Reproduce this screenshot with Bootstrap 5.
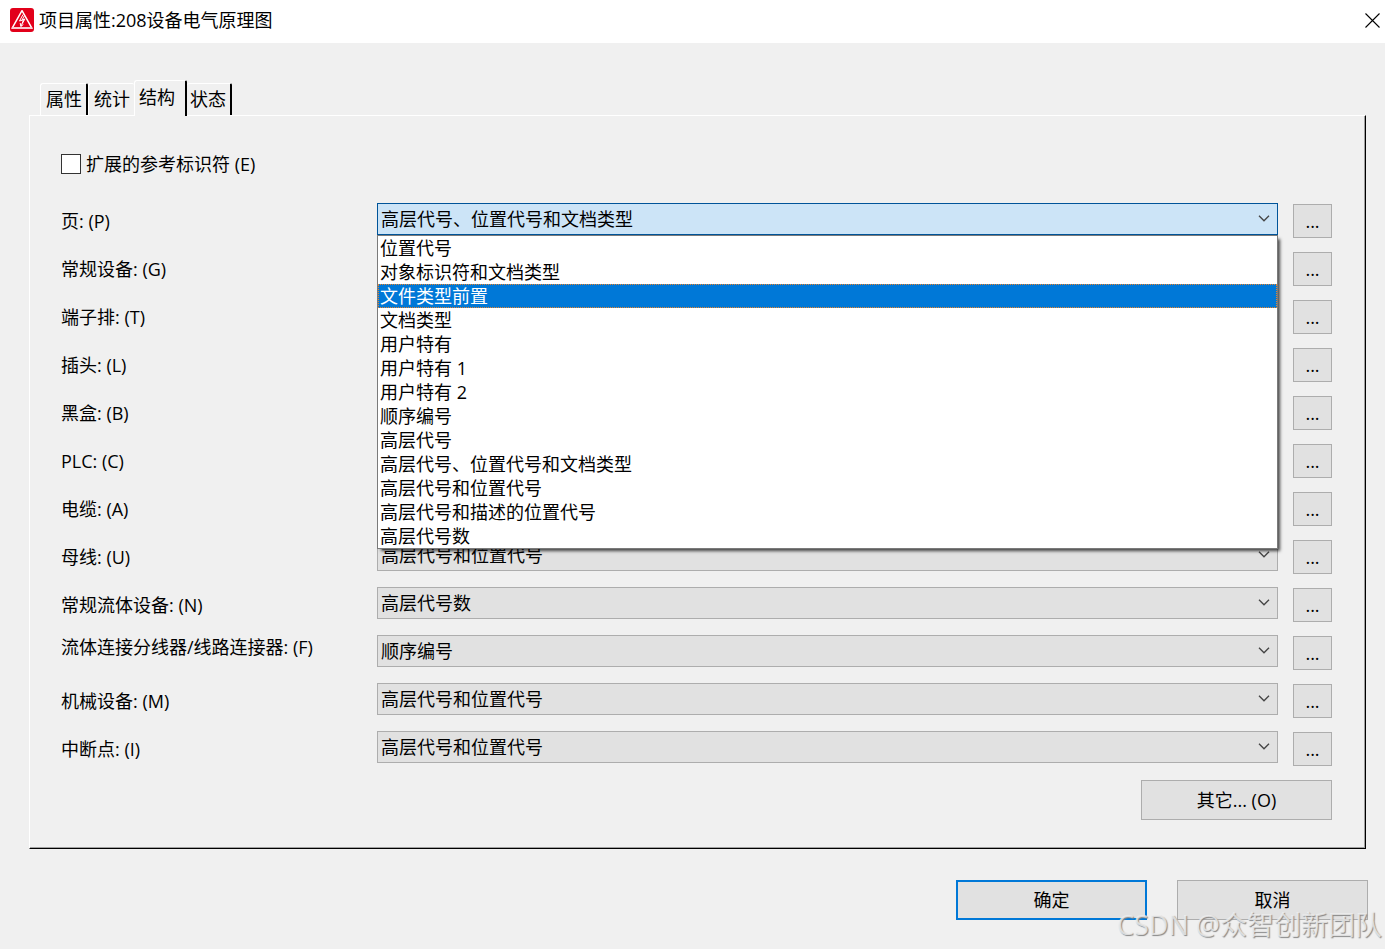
<!DOCTYPE html>
<html lang="zh-CN">
<head>
<meta charset="utf-8">
<meta name="viewport" content="width=device-width, initial-scale=1">
<title>项目属性:208设备电气原理图</title>
<link href="https://cdn.jsdelivr.net/npm/bootstrap@5.3.0/dist/css/bootstrap.min.css" rel="stylesheet">
<style>
  body { font-family: "Open Sans", "Noto Sans CJK SC", sans-serif; font-size: 18px; line-height: 24px; color: #000; background: #f0f0f0; }
  .title-bar { height: 43px; padding: 0 4px 3px 10px; gap: 5px; }
  .title-bar h1 { font-size: 18px; line-height: 24px; font-weight: 400; }
  .close-btn { width: 17px; height: 17px; }
  .dialog-body { padding: 37px 17px 29px 29px; }

  .tab-strip { padding-left: 11px; }
  .tab-btn { height: 32px; padding: 0 4px 1px 5px; border: 1px solid #fff; border-width: 1px 2px 0 1px; border-right-color: #000; border-radius: 3px 2px 0 0; background: #f0f0f0; color: #000; }
  .tab-btn.before-active { border-right: 0; }
  .tab-btn.active { height: 36px; padding: 0 10px 3px 4px; margin-bottom: -1px; position: relative; z-index: 1; }
  .tab-btn.after-active { padding-left: 3px; border-left: 0; }

  .panel { margin-right: 2px; padding: 36px 33px 28px 31px; border: 1px solid #fff; border-right-color: #000; border-bottom-color: #000; box-shadow: inset -1px -1px #a0a0a0; }
  .check-line { gap: 5px; margin-bottom: 27px; }
  .check-line .form-check-input { width: 20px; height: 20px; margin: 0; border: 1px solid #333; border-radius: 0; background-color: #fff; }

  .field-row { display: grid; grid-template-columns: 316px minmax(0, 1fr) 39px; height: 48px; align-items: start; }
  .field-row label { line-height: 36px; white-space: nowrap; }
  .field-row label.raised { line-height: 24px; }
  .combo { position: relative; margin-right: 15px; }
  .combo .form-select { height: 32px; padding: 0 24px 0 3px; font-size: 18px; line-height: 30px; color: #000; border: 1px solid #adadad; border-radius: 0;
    background: #e1e1e1 url("data:image/svg+xml,%3Csvg xmlns='http://www.w3.org/2000/svg' width='12' height='8'%3E%3Cpath d='M1 .8 6 5.8 11 .8' fill='none' stroke='%23444' stroke-width='1.3'/%3E%3C/svg%3E") no-repeat right 7px center / 12px 8px; }
  .combo.open .form-select { background-color: #cce4f7; border-color: #005499; }
  .drop-list { position: absolute; top: 100%; left: 0; right: 0; z-index: 5; border: 1px solid #7a7a7a; background: #fff; box-shadow: 3px 3px 3px -1px rgba(0,0,0,.7); }
  .drop-list li { padding-left: 2px; height: 24px; }
  .drop-list li.chosen { background: #0078d7; color: #fff; outline: 1px dotted #e8842c; outline-offset: -1px; }

  .win-btn { width: 191px; height: 40px; padding: 0; border: 1px solid #adadad; background: #e1e1e1; color: #000; }
  .more-btn { width: 39px; height: 34px; margin-top: 1px; }
  .win-btn.primary { border: 2px solid #0078d7; }
  .other-line { padding-top: 1px; }
  .actions { gap: 30px; margin-top: 31px; }
  .watermark { position: absolute; right: 3px; bottom: 6px; font-size: 27px; line-height: 36px; color: rgba(240,240,240,.8); text-shadow: 1px 1px 1px #888; pointer-events: none; }
</style>
</head>
<body>
<div class="position-relative min-vh-100 overflow-hidden">
  <header class="title-bar bg-white d-flex align-items-center">
    <svg width="24" height="24" viewBox="0 0 24 24" aria-hidden="true">
      <rect width="24" height="24" rx="3" fill="#e2001a"/>
      <path d="M12 2.7 22 20.3H2z" fill="none" stroke="#fff" stroke-width="1.5" stroke-linejoin="round"/>
      <path d="M2.2 20H21.8" stroke="#f9c9ce" stroke-width="2"/>
      <path d="M13 6.5 9.5 13l4-1.2L11.2 18M14.2 8l-2.1 3.8 2.8-.8-2.6 4.6M10.2 15l.6 3.6 2.6-2.2" fill="none" stroke="#fff" stroke-width="1"/>
    </svg>
    <h1 class="m-0 me-auto">项目属性:208设备电气原理图</h1>
    <button type="button" class="close-btn border-0 bg-transparent p-0 d-flex" aria-label="关闭">
      <svg width="17" height="17" viewBox="0 0 17 17"><path d="M1.5 1.5 15.5 15.5M15.5 1.5 1.5 15.5" stroke="#000" stroke-width="1.1"/></svg>
    </button>
  </header>

  <main class="dialog-body">
    <div class="tab-strip d-flex align-items-end" role="tablist">
      <button type="button" class="tab-btn" role="tab">属性</button>
      <button type="button" class="tab-btn before-active" role="tab">统计</button>
      <button type="button" class="tab-btn active" role="tab" aria-selected="true">结构</button>
      <button type="button" class="tab-btn after-active" role="tab">状态</button>
    </div>

    <section class="panel">
      <div class="check-line d-flex align-items-center">
        <input class="form-check-input" type="checkbox" id="ext">
        <label for="ext">扩展的参考标识符 (E)</label>
      </div>

      <div class="field-row">
        <label for="f1">页: (P)</label>
        <div class="combo open">
          <select class="form-select" id="f1"><option>高层代号、位置代号和文档类型</option></select>
          <ul class="drop-list list-unstyled m-0" role="listbox" aria-label="页">
            <li role="option">位置代号</li>
            <li role="option">对象标识符和文档类型</li>
            <li role="option" class="chosen" aria-selected="true">文件类型前置</li>
            <li role="option">文档类型</li>
            <li role="option">用户特有</li>
            <li role="option">用户特有 1</li>
            <li role="option">用户特有 2</li>
            <li role="option">顺序编号</li>
            <li role="option">高层代号</li>
            <li role="option">高层代号、位置代号和文档类型</li>
            <li role="option">高层代号和位置代号</li>
            <li role="option">高层代号和描述的位置代号</li>
            <li role="option">高层代号数</li>
          </ul>
        </div>
        <button type="button" class="win-btn more-btn">...</button>
      </div>
      <div class="field-row">
        <label for="f2">常规设备: (G)</label>
        <div class="combo"><select class="form-select" id="f2"></select></div>
        <button type="button" class="win-btn more-btn">...</button>
      </div>
      <div class="field-row">
        <label for="f3">端子排: (T)</label>
        <div class="combo"><select class="form-select" id="f3"></select></div>
        <button type="button" class="win-btn more-btn">...</button>
      </div>
      <div class="field-row">
        <label for="f4">插头: (L)</label>
        <div class="combo"><select class="form-select" id="f4"></select></div>
        <button type="button" class="win-btn more-btn">...</button>
      </div>
      <div class="field-row">
        <label for="f5">黑盒: (B)</label>
        <div class="combo"><select class="form-select" id="f5"></select></div>
        <button type="button" class="win-btn more-btn">...</button>
      </div>
      <div class="field-row">
        <label for="f6">PLC: (C)</label>
        <div class="combo"><select class="form-select" id="f6"></select></div>
        <button type="button" class="win-btn more-btn">...</button>
      </div>
      <div class="field-row">
        <label for="f7">电缆: (A)</label>
        <div class="combo"><select class="form-select" id="f7"></select></div>
        <button type="button" class="win-btn more-btn">...</button>
      </div>
      <div class="field-row">
        <label for="f8">母线: (U)</label>
        <div class="combo"><select class="form-select" id="f8"><option>高层代号和位置代号</option></select></div>
        <button type="button" class="win-btn more-btn">...</button>
      </div>
      <div class="field-row">
        <label for="f9">常规流体设备: (N)</label>
        <div class="combo"><select class="form-select" id="f9"><option>高层代号数</option></select></div>
        <button type="button" class="win-btn more-btn">...</button>
      </div>
      <div class="field-row">
        <label for="f10" class="raised">流体连接分线器/线路连接器: (F)</label>
        <div class="combo"><select class="form-select" id="f10"><option>顺序编号</option></select></div>
        <button type="button" class="win-btn more-btn">...</button>
      </div>
      <div class="field-row">
        <label for="f11">机械设备: (M)</label>
        <div class="combo"><select class="form-select" id="f11"><option>高层代号和位置代号</option></select></div>
        <button type="button" class="win-btn more-btn">...</button>
      </div>
      <div class="field-row">
        <label for="f12">中断点: (I)</label>
        <div class="combo"><select class="form-select" id="f12"><option>高层代号和位置代号</option></select></div>
        <button type="button" class="win-btn more-btn">...</button>
      </div>

      <div class="other-line d-flex justify-content-end">
        <button type="button" class="win-btn">其它... (O)</button>
      </div>
    </section>

    <div class="actions d-flex justify-content-end">
      <button type="button" class="win-btn primary">确定</button>
      <button type="button" class="win-btn">取消</button>
    </div>
  </main>
  <div class="watermark">CSDN @众智创新团队</div>
</div>
<script src="https://cdn.jsdelivr.net/npm/bootstrap@5.3.0/dist/js/bootstrap.bundle.min.js"></script>
</body>
</html>
